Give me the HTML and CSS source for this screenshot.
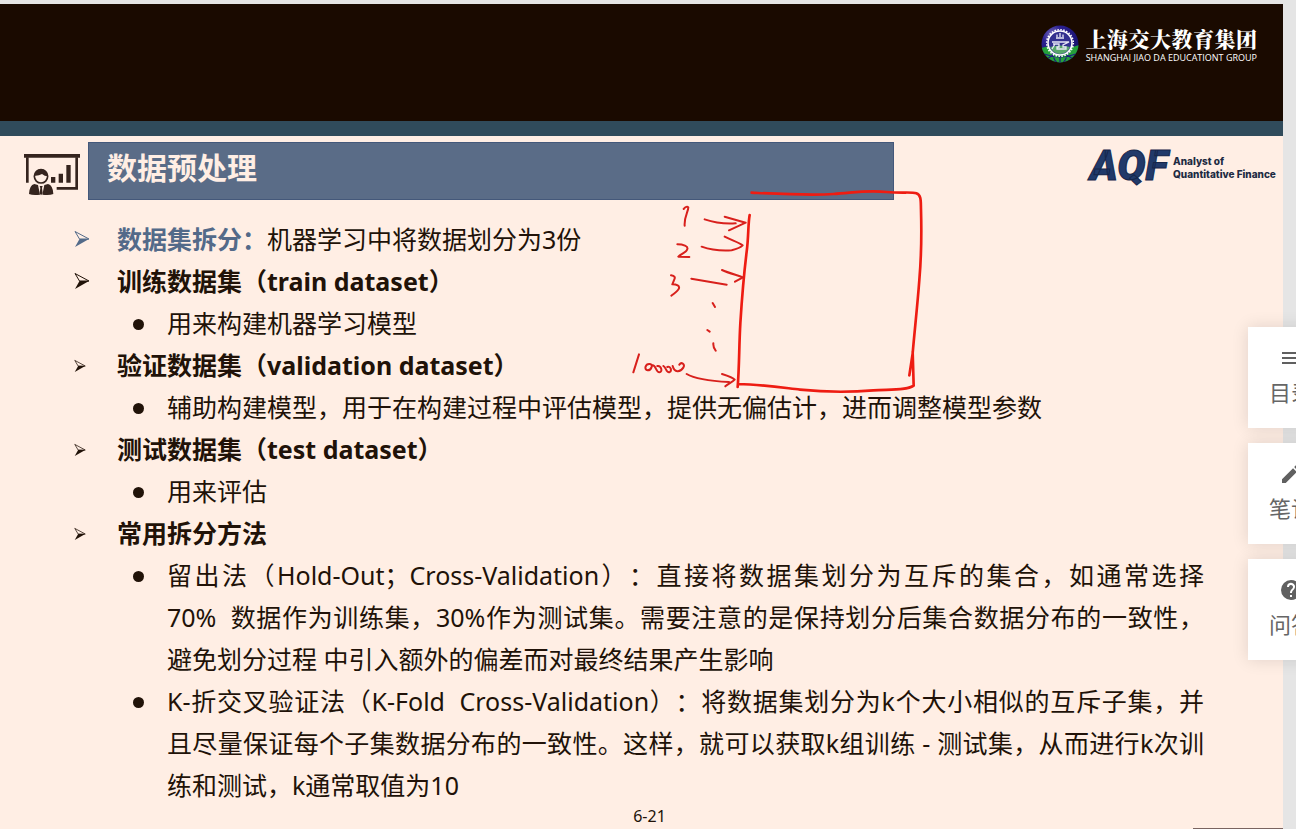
FILE: index.html
```html
<!DOCTYPE html>
<html lang="zh-CN">
<head>
<meta charset="utf-8">
<title>数据预处理</title>
<link rel="stylesheet" href="styles.css">
</head>
<body>
<svg class="defs" aria-hidden="true">
  <symbol id="arrow" viewBox="0 0 16 18">
    <path d="M1 1.500 15 9 5.500 9Z" fill="none" stroke="currentColor" stroke-width="1"/>
    <path d="M5.500 9H15L1 17Z" fill="currentColor"/>
  </symbol>
</svg>
<main class="player">
  <header class="topbar">
    <div class="group">
      <svg class="emblem" viewBox="0 0 38 38" aria-hidden="true">
        <defs>
          <radialGradient id="globe" cx=".3" cy=".25" r=".8">
            <stop offset="0" stop-color="#7a70c0"/><stop offset=".35" stop-color="#2b2090"/><stop offset="1" stop-color="#15106a"/>
          </radialGradient>
          <clipPath id="round"><circle cx="19" cy="19" r="18.500"/></clipPath>
        </defs>
        <circle cx="19" cy="19" r="18.500" fill="url(#globe)"/>
        <g clip-path="url(#round)">
          <path d="M0 23Q9 20 19 22T38 20V38H0Z" fill="#24a03a"/>
          <path d="M19 22V38M10 23Q11 32 16 38M28 23Q27 32 22 38M3 29Q19 35 35 29M6 34 12 30M32 34 26 30" fill="none" stroke="#1c1c80" stroke-width="1.200"/>
        </g>
        <circle cx="19" cy="18" r="12" fill="#33308f"/>
        <path d="M9 22Q19 19 29 22 26 29 19 29T9 22" fill="#58a86a"/>
        <circle cx="19" cy="18" r="12" fill="none" stroke="#fff" stroke-width="1.600"/>
        <circle cx="19" cy="18" r="13.300" fill="none" stroke="#fff" stroke-width="1.600" stroke-dasharray="1.500 1.480"/>
        <path d="M16 12V9.500M19 12V8M22 12V9.500M15 13H23M11 17H28L22 20V22H25V24H16V22H18V19H12M14 19 11 24" fill="none" stroke="#e8e8f6" stroke-width="1.300"/>
      </svg>
      <div class="group-name">
        <strong>上海交大教育集团</strong>
        <span>SHANGHAI JIAO DA EDUCATIONT GROUP</span>
      </div>
    </div>
  </header>
  <article class="slide">
    <header class="slide-head">
      <svg class="lecture" viewBox="0 0 168 130" aria-hidden="true">
        <path d="M0 2H168V13H0Z" fill="#35241e"/>
        <path d="M10 12V88M158 12V105H98" fill="none" stroke="#35241e" stroke-width="8"/>
        <path d="M81 71H94V88H81ZM104 61H117V88H104ZM127 35H140V88H127Z" fill="#35241e"/>
        <circle cx="51" cy="69" r="20" fill="none" stroke="#35241e" stroke-width="5"/>
        <path d="M31 67Q34 48 51 48T71 69Q62 69 54 62 44 68 31 67Z" fill="#35241e"/>
        <path d="M15 122Q16 96 31 92L42 95 48 124Q27 127 15 122M88 122Q87 96 72 92L61 95 55 124Q76 127 88 122" fill="#35241e"/>
        <path d="M47 98H56L54 104 56 120 51 126 47 120 49 104Z" fill="#35241e"/>
      </svg>
      <h1>数据预处理</h1>
      <div class="brand">
        <svg class="brand-mark" viewBox="0 0 83 42" role="img" aria-label="AQF">
          <text x="0" y="36">AQF</text>
        </svg>
        <p>Analyst of<br>Quantitative Finance</p>
      </div>
    </header>
    <ul class="outline">
      <li class="accent"><svg class="arrow"><use href="#arrow"/></svg><p><b>数据集拆分：</b><span>机器学习中将数据划分为3份</span></p></li>
      <li><svg class="arrow"><use href="#arrow"/></svg><p><b>训练数据集（train dataset）</b></p>
        <ul><li><i class="dot"></i><p>用来构建机器学习模型</p></li></ul></li>
      <li><svg class="arrow small"><use href="#arrow"/></svg><p><b>验证数据集（validation dataset）</b></p>
        <ul><li><i class="dot"></i><p>辅助构建模型，用于在构建过程中评估模型，提供无偏估计，进而调整模型参数</p></li></ul></li>
      <li><svg class="arrow small"><use href="#arrow"/></svg><p><b>测试数据集（test dataset）</b></p>
        <ul><li><i class="dot"></i><p>用来评估</p></li></ul></li>
      <li><svg class="arrow small"><use href="#arrow"/></svg><p><b>常用拆分方法</b></p>
        <ul>
          <li><i class="dot"></i><p><span class="line">留出法（Hold-Out；Cross-Validation）：直接将数据集划分为互斥的集合，如通常选择</span><span class="line">70%&nbsp; 数据作为训练集，30%作为测试集。需要注意的是保持划分后集合数据分布的一致性，</span>避免划分过程 中引入额外的偏差而对最终结果产生影响</p></li>
          <li><i class="dot"></i><p><span class="line">K-折交叉验证法（K-Fold&nbsp; Cross-Validation）：将数据集划分为k个大小相似的互斥子集，并</span><span class="line">且尽量保证每个子集数据分布的一致性。这样，就可以获取k组训练 - 测试集，从而进行k次训</span>练和测试，k通常取值为10</p></li>
        </ul></li>
    </ul>
    <footer class="page-no">6-21</footer>
    <div class="corner-line"></div>
  </article>
  <svg class="ink" viewBox="0 0 930 660" aria-hidden="true">
    <path d="M395 38C480 42 570 47 640 42S740 30 800 36C850 40 875 35 889 40 905 46 902 65 903 90 905 160 904 230 898 300 892 380 884 450 878 520L868 586M878 515 881 617C860 632 810 628 760 631 690 637 600 635 540 629 480 622 420 613 355 612M389 105C384 130 386 170 380 215 372 280 366 350 361 430 357 500 358 560 353 621"/>
    <path class="thin" d="M191 87Q200 77 205 82C205 95 192 110 194 137M254 118C280 127 315 132 347 130M314 110 377 128 327 151M172 193C190 193 205 199 202 207 200 217 183 222 175 230L208 231M245 200C270 209 305 213 335 211Q360 204 368 196C355 187 335 181 314 170M153 286C165 288 166 292 163 298L157 313C171 313 179 318 177 325 175 333 163 340 154 347M214 296 320 314M306 270C325 279 350 285 369 292L345 305M278 369 285 381M262 450 269 455M280 490Q279 502 287 512M57 523 40 577M90 552C76 550 71 569 83 571 95 571 100 552 90 552M98 556C108 556 108 577 118 577 129 576 124 556 112 558M130 558C138 560 138 579 148 577 157 574 152 556 142 561M158 558C163 578 180 578 190 563 196 551 184 545 178 554M200 582C225 597 268 603 327 606M306 582C325 588 340 594 344 599 336 607 325 611 316 619"/>
  </svg>
  <nav class="tools">
    <button type="button"><svg viewBox="0 0 24 24"><path d="M3 18h18v-2H3v2zm0-5h18v-2H3v2zm0-7v2h18V6H3z"/></svg>目录</button>
    <button type="button"><svg viewBox="0 0 24 24"><path d="M3 17.250V21h3.750L17.810 9.940l-3.750-3.750L3 17.250zM20.710 7.040a1 1 0 0 0 0-1.410l-2.340-2.340a1 1 0 0 0-1.410 0l-1.830 1.830 3.750 3.750 1.830-1.830z"/></svg>笔记</button>
    <button type="button"><svg viewBox="0 0 24 24"><path d="M12 2a10 10 0 1 0 0 20 10 10 0 0 0 0-20zm1 17h-2v-2h2v2zm2.070-7.750-.9.920C13.450 12.900 13 13.500 13 15h-2v-.5c0-1.100.45-2.100 1.170-2.830l1.240-1.260A2 2 0 1 0 10 9H8a4 4 0 1 1 7.070 2.250z"/></svg>问答</button>
  </nav>
</main>
</body>
</html>
```
FILE: styles.css
```css
* { box-sizing: border-box; }
body {
  margin: 0;
  background: #e5e5e5;
  font-family: "Noto Sans", "Noto Sans CJK SC", sans-serif;
  overflow: hidden;
  text-spacing-trim: space-all;
}
h1, p, ul { margin: 0; padding: 0; }
ul { list-style: none; }
.defs { display: none; }

.player {
  position: relative;
  display: flex;
  flex-direction: column;
  min-height: 100vh;
  padding: 4px 13px 0 0;
}
.topbar {
  display: flex;
  justify-content: flex-end;
  height: 117px;
  padding: 21px 26px 0 0;
  background: #1a0a00;
}
.group { display: flex; gap: 7px; height: 40px; color: #fff; }
.emblem { width: 38px; height: 38px; }
.group-name { display: flex; flex-direction: column; white-space: nowrap; }
.group-name strong {
  font: 900 21px/27px "Noto Serif CJK SC", "Noto Sans CJK SC", serif;
  text-align-last: justify;
}
.group-name span { font: 9px/12px "Open Sans", sans-serif; }

.slide {
  flex: 1;
  display: flex;
  flex-direction: column;
  border-top: 15px solid #304b5b;
  background: #ffeee4;
  color: #211208;
}
.slide-head { display: flex; align-items: flex-start; padding: 6px 8px 0 24px; }
.lecture { flex: none; width: 56px; height: 44px; margin: 11px 8px 0 0; }
.slide-head h1 {
  flex: 1;
  height: 58px;
  padding-left: 18px;
  border: 1px solid #44587a;
  background: #5a6c87;
  color: #ffeee4;
  font-size: 30px;
  line-height: 50px;
}
.brand { display: flex; width: 381px; padding: 2px 0 0 196px; }
.brand-mark { flex: none; width: 83px; height: 42px; overflow: visible; }
.brand-mark text {
  font: italic 900 42px Roboto, sans-serif;
  fill: #213a6a;
  stroke: #16264a;
  stroke-width: 1px;
}
.brand p {
  padding-top: 11px;
  color: #202a42;
  font: 800 10px/13px Inter, sans-serif;
  white-space: nowrap;
}

.outline { padding: 18px 79px 0 74px; font-size: 25px; line-height: 42px; }
.outline li { display: grid; grid-template-columns: 43px 1fr; }
.outline ul { grid-column: 1 / -1; padding-left: 59px; }
.outline ul li { grid-template-columns: 34px 1fr; }
.arrow { width: 16px; height: 18px; margin-top: 12px; }
.arrow.small { width: 12px; height: 14px; margin-top: 15px; }
.dot { width: 11px; height: 11px; margin-top: 17px; border-radius: 50%; background: #211208; }
.accent .arrow, .accent b { color: #536a89; }
.outline p { white-space: nowrap; }
.line { display: block; text-align: justify; text-align-last: justify; }

.page-no { padding-left: 16px; font-size: 16px; line-height: 20px; text-align: center; }
.corner-line { width: 90px; height: 1px; margin: auto 0 0 auto; background: #7a6460; }

.ink { position: absolute; left: 620px; top: 180px; width: 310px; height: 220px; }
.ink path {
  fill: none;
  stroke: #ee1c12;
  stroke-width: 8;
  stroke-linecap: round;
  stroke-linejoin: round;
}
.ink .thin { stroke: #d8201c; stroke-width: 6; }

.tools {
  position: absolute;
  top: 327px;
  right: -38px;
  display: flex;
  flex-direction: column;
  gap: 15px;
}
.tools button {
  display: flex;
  flex-direction: column;
  align-items: center;
  width: 86px;
  height: 101px;
  padding: 19px 0 0;
  border: 0;
  background: #fff;
  box-shadow: 0 0 16px rgba(0, 0, 0, .12);
  color: #666;
  font: 22px/34px "Noto Sans CJK SC", sans-serif;
}
.tools svg { width: 24px; height: 24px; margin-bottom: 4px; fill: #606060; }
```
